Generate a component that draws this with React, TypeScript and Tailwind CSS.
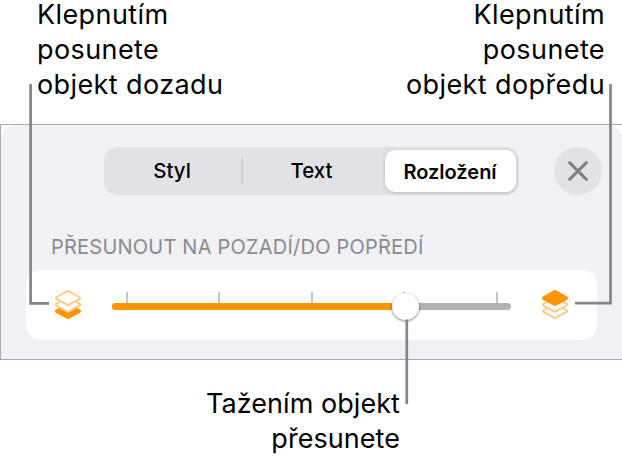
const TICKS = ['left-[14px]', 'left-[106px]', 'left-[199px]', 'left-[291px]', 'left-[384px]'];

function Close() {
  return (
    <button aria-label="Zavřít" className="ml-[35px] flex size-12 items-center justify-center rounded-full bg-[#e2e1e6]">
      <svg width="22" height="22" viewBox="0 0 22 22" className="stroke-[#807f84]" strokeWidth="2.9" strokeLinecap="round">
        <path d="M2.6 2.6 19.4 19.4M19.4 2.6 2.6 19.4" />
      </svg>
    </button>
  );
}

const DIAMOND = 'M12.9 2.3Q14 1.7 15.1 2.3L25.6 8.3Q26.8 9.1 25.6 9.9L15.1 15.7Q14 16.3 12.9 15.7L2.4 9.9Q1.2 9.1 2.4 8.3Z';

function Layers({ front }: { front: boolean }) {
  const pale = { fill: '#fff', stroke: '#ffca85' };
  const solid = { fill: '#ff9500', stroke: '#ff9500' };
  return (
    <svg width="28" height="32" viewBox="0 0 28 32" strokeWidth="1.9" strokeLinejoin="round">
      <path d={DIAMOND} transform="translate(0 13)" {...(front ? pale : solid)} />
      <path d={DIAMOND} transform="translate(0 6.6)" {...pale} />
      <path d={DIAMOND} {...(front ? solid : pale)} />
    </svg>
  );
}

export default function App() {
  return (
    <main className="relative flex h-[463px] w-[622px] flex-col overflow-hidden bg-white font-['Inter','Liberation_Sans',sans-serif] text-black">
      <header className="flex h-[124px] justify-between pl-[37px] pr-[17px] text-[27px] leading-[35px] tracking-[0.4px]">
        <p className="whitespace-nowrap"><span className="block h-[32px] leading-[29px]">Klepnutím</span>posunete<br />objekt dozadu</p>
        <p className="whitespace-nowrap text-right"><span className="block h-[32px] leading-[29px]">Klepnutím</span>posunete<br />objekt dopředu</p>
      </header>
      <section className="h-[236px] border border-r-0 border-[#a9a9ac]">
        <div className="flex h-full flex-col rounded-t-[14px] bg-[#f1f0f5] pt-[22px]">
          <div className="flex pl-[103px]">
            <div className="flex h-12 w-[415px] items-center rounded-[13px] bg-[#e2e1e6] text-[20.5px] font-medium leading-none">
              <span className="w-[136px] pt-px text-center">Styl</span>
              <span className="ml-px h-[26px] w-[1.5px] bg-[#d0cfd4]" />
              <span className="w-[138px] pt-px text-center">Text</span>
              <span className="ml-[4px] flex h-[42px] w-[131px] items-center justify-center rounded-[10px] bg-white pt-px text-[20px] font-semibold shadow-[0_1px_4px_#0000002b]">Rozložení</span>
            </div>
            <Close />
          </div>
          <h2 className="mt-[39px] h-[36px] whitespace-nowrap pl-[50px] pt-px text-[20px] leading-[25px] tracking-[0.22px] text-[#8a8a8e]">PŘESUNOUT NA POZADÍ/DO POPŘEDÍ</h2>
          <div className="ml-[25px] flex h-[70px] w-[571px] items-center rounded-[15px] bg-white pl-[28px]">
            <Layers front={false} />
            <div className="relative ml-[30px] mt-[3px] h-[7px] w-[399px] rounded-full bg-[#b2b2b2]">
              {TICKS.map((t) => <i key={t} className={`absolute -top-[11px] h-[11px] w-[1.5px] bg-[#c5c5c7] ${t}`} />)}
              <div className="h-full w-[294px] rounded-full bg-[#ff9500]" />
              <div className="absolute left-[280px] -top-[10px] size-[27px] rounded-full bg-white shadow-[0_1px_3px_#00000080]" />
            </div>
            <div className="ml-[30px]"><Layers front /></div>
          </div>
        </div>
      </section>
      <footer className="flex justify-end pr-[222px] pt-[26px] text-right text-[27px] leading-[35px] tracking-[0.05px]">
        <p className="whitespace-nowrap">Tažením objekt<br />přesunete</p>
      </footer>
      <svg className="pointer-events-none absolute inset-0" width="622" height="463" fill="none" stroke="#858585" strokeWidth="2.7">
        <path d="M30.6 84V303.3H49M610.5 84V303.2H575M406.8 319.5V404" />
      </svg>
    </main>
  );
}
